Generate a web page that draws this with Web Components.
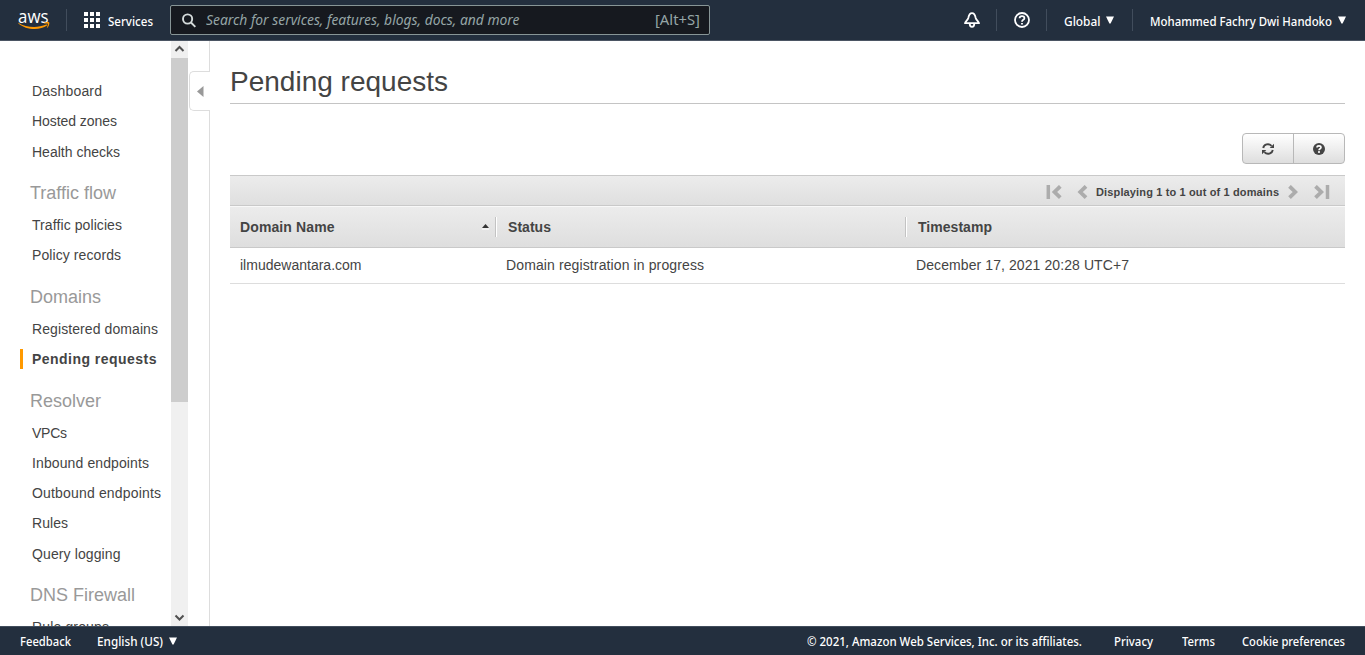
<!DOCTYPE html>
<html lang="en">
<head>
<meta charset="utf-8">
<title>Route 53 Console</title>
<style>
html,body{margin:0;height:100%;overflow:hidden;background:#fff}
body{font-family:"Liberation Sans",Arial,sans-serif;font-size:14px;color:#444}
</style>
</head>
<body>
<console-app></console-app>
<script>
const define=(name,html,ready)=>{
  const t=document.createElement('template');t.innerHTML=html;
  customElements.define(name,class extends HTMLElement{
    constructor(){super();this.attachShadow({mode:'open'}).appendChild(t.content.cloneNode(true));}
    connectedCallback(){if(ready)ready(this,this.shadowRoot);}
  });
};

/* Text run set to a given advance width: by tracking, or by horizontal scale with the "scale" attribute. */
define('fit-text',`<style>:host{display:inline-block;white-space:nowrap;flex:none}span{display:inline-block;transform-origin:0 50%}</style><span></span>`,(el,root)=>{
  const s=root.querySelector('span'),w=+el.getAttribute('w'),text=el.textContent;
  s.textContent=text;
  const n=s.getBoundingClientRect().width;
  el.style.width=w+'px';
  if(!n)return;
  if(el.hasAttribute('scale'))s.style.transform='scaleX('+w/n+')';
  else s.style.letterSpacing=(w-n)/(text.length-1)+'px';
});

define('down-caret',`<style>:host{display:block;flex:none;height:8px}svg{display:block}</style><svg width="8" height="8"><path d="M0 .5h8L4.6 7.5H3.4z" fill="#fff"/></svg>`);

define('aws-logo',`<style>:host{display:block;width:32px;height:26px;position:relative;font:500 18.500px/18px "Open Sans","Noto Sans",sans-serif;color:#fff}
fit-text{position:absolute;left:0;top:-1px}svg{position:absolute;left:0;top:14.500px}</style>
<fit-text w="30.500" scale>aws</fit-text>
<svg width="32" height="8" viewBox="0 0 32 8"><path d="M.3.7C8 5.6 19 6.6 28.3 2.6c.9-.4 1.5.4.7 1C22 8.600 8 8.400.2 1.200-.1.900 0 .600.3.700z" fill="#f90"/><path d="M26 .8c2-.9 4.800-.8 5.200-.3.400.5-.1 3.900-1.900 5.300-.3.200-.6.100-.4-.200.500-1.200 1.300-3.300.9-3.800-.4-.5-2.500-.3-3.600-.2-.4 0-.4-.5-.2-.8z" fill="#f90"/></svg>`);

define('top-bar',`<style>
:host{display:flex;align-items:center;box-sizing:border-box;height:41px;background:#232f3e;border-bottom:1px solid #4b5563;color:#fff;font:500 13px/20px "Noto Sans",sans-serif}
aws-logo{margin:1px 16px 0 18px}
i{width:1px;height:22px;background:#414d5c;flex:none}
.grid{margin:0 8px 0 17px;flex:none}
.search{box-sizing:border-box;display:flex;align-items:center;width:540px;height:30px;margin-left:17px;border:1px solid #879596;border-radius:2px;background:#16191f;color:#95a5a6;font-size:14px;font-weight:400}
.search svg{margin:0 9.500px 0 11px}.search em{flex:1}.search>fit-text{margin-right:9px}
.right{display:flex;align-items:center;margin-left:auto}
svg{display:block}
</style>
<aws-logo></aws-logo><i></i>
<svg class="grid" width="16" height="16" fill="#fff"><path d="M0 0h4v4H0zM6 0h4v4H6zM12 0h4v4h-4zM0 6h4v4H0zM6 6h4v4H6zM12 6h4v4h-4zM0 12h4v4H0zM6 12h4v4H6zM12 12h4v4h-4z"/></svg>
<fit-text w="45" scale style="margin-top:1px">Services</fit-text>
<div class="search"><svg width="14" height="15" viewBox="0 0 14 15" fill="none" stroke="#d5dbdb" stroke-width="1.9"><circle cx="5.600" cy="6" r="4.600"/><path d="M9 9.500l4.300 4.300"/></svg>
<em><fit-text w="313.500" scale>Search for services, features, blogs, docs, and more</fit-text></em><fit-text w="45" scale>[Alt+S]</fit-text></div>
<div class="right">
<svg width="16" height="16" viewBox="0 0 16 16" fill="none" stroke="#fff" stroke-width="1.800" stroke-linejoin="round" style="margin-right:16px"><path d="M8 1.200C5.200 1.200 4.800 3.600 4.300 6 3.800 8 1 9.800 1 11.200h14c0-1.400-2.800-3.200-3.300-5.200C11.200 3.600 10.800 1.200 8 1.200zM5.700 11.500c0 4.400 4.600 4.400 4.600 0"/></svg><i></i>
<svg width="16" height="16" viewBox="0 0 16 16" fill="none" stroke="#fff" stroke-width="1.800" style="margin:0 16px 0 17px"><circle cx="8" cy="8" r="7"/><path d="M5.600 6.300C5.600 3.300 10.400 3.300 10.400 6.200 10.400 8 8 7.600 8 9.800M8 10.900v1.600"/></svg><i></i>
<fit-text w="36.500" scale style="margin:1px 6px 0 17px">Global</fit-text><down-caret></down-caret><i style="margin-left:18px"></i>
<fit-text w="182" scale style="margin:1px 6px 0 17px">Mohammed Fachry Dwi Handoko</fit-text><down-caret style="margin-right:19px"></down-caret>
</div>`);

define('bottom-bar',`<style>
:host{display:flex;align-items:center;box-sizing:border-box;height:29px;background:#232f3e;border-top:1px solid #414d5c;color:#fff;font:500 12px/20px "Noto Sans",sans-serif;padding:2px 20px 0}
.right{margin-left:auto;display:flex;gap:32px}
</style>
<fit-text w="51" scale style="margin-right:26px">Feedback</fit-text><fit-text w="66" scale style="margin-right:6px">English (US)</fit-text><down-caret style="margin-top:-2px"></down-caret>
<div class="right"><fit-text w="275" scale>© 2021, Amazon Web Services, Inc. or its affiliates.</fit-text><fit-text w="39" scale>Privacy</fit-text><fit-text w="33" scale style="margin-left:-3px">Terms</fit-text><fit-text w="103" scale style="margin-left:-5px">Cookie preferences</fit-text></div>`);

define('nav-item',`<style>
:host{display:flex;align-items:center;box-sizing:border-box;height:30.200px;padding-left:32px;line-height:16px}
:host([active]){font-weight:700;padding-left:28px}
b{display:none}:host([active]) b{display:block;width:3px;height:20px;background:#f90;margin:0 9px 0 -8px}
</style><b></b><slot></slot>`);
define('nav-heading',`<style>:host{display:block;box-sizing:border-box;height:43.500px;padding:16.300px 0 0 30px;font-size:18px;line-height:21px;color:#999}</style><slot></slot>`);

define('scroll-track',`<style>
:host{display:flex;flex-direction:column;width:17px;background:#f0f0f0;flex:none}
svg{display:block;flex:none}.thumb{height:344px;background:#cdcdcd}.space{flex:1}
</style>
<svg width="17" height="17" fill="none" stroke="#505050" stroke-width="2"><path d="M4.500 10l4-4 4 4"/></svg><div class="thumb"></div><div class="space"></div>
<svg width="17" height="17" fill="none" stroke="#505050" stroke-width="2"><path d="M4.500 6.500l4 4 4-4"/></svg>`);

define('side-nav',`<style>
:host{display:flex;box-sizing:border-box;width:210px;border-right:1px solid #ddd;overflow:visible;position:relative}
nav{width:171px;box-sizing:border-box;padding-top:34.900px;overflow:hidden}
.tab{position:absolute;left:189px;top:30px;width:21px;height:40px;box-sizing:border-box;background:#fff;border:1px solid #ddd;border-right:0;border-radius:5px 0 0 5px}
.tab svg{display:block;margin:14px 0 0 7px}
</style>
<nav>
<nav-item><fit-text w="70">Dashboard</fit-text></nav-item>
<nav-item><fit-text w="85">Hosted zones</fit-text></nav-item>
<nav-item style="padding-top:.500px"><fit-text w="88">Health checks</fit-text></nav-item>
<nav-heading><fit-text w="86">Traffic flow</fit-text></nav-heading>
<nav-item><fit-text w="90">Traffic policies</fit-text></nav-item>
<nav-item><fit-text w="89">Policy records</fit-text></nav-item>
<nav-heading><fit-text w="71">Domains</fit-text></nav-heading>
<nav-item><fit-text w="126">Registered domains</fit-text></nav-item>
<nav-item active><fit-text w="124.500">Pending requests</fit-text></nav-item>
<nav-heading><fit-text w="71">Resolver</fit-text></nav-heading>
<nav-item><fit-text w="35">VPCs</fit-text></nav-item>
<nav-item><fit-text w="117">Inbound endpoints</fit-text></nav-item>
<nav-item><fit-text w="129">Outbound endpoints</fit-text></nav-item>
<nav-item><fit-text w="36">Rules</fit-text></nav-item>
<nav-item><fit-text w="88.500">Query logging</fit-text></nav-item>
<nav-heading><fit-text w="105">DNS Firewall</fit-text></nav-heading>
<nav-item><fit-text w="77">Rule groups</fit-text></nav-item>
</nav><scroll-track></scroll-track>
<div class="tab"><svg width="7" height="12"><path d="M6.500 0v11L0 5.500z" fill="#999"/></svg></div>`);

define('tool-buttons',`<style>
:host{display:flex;box-sizing:border-box;width:103px;height:31px;border:1px solid #b8b8b8;border-radius:4px;background:linear-gradient(#fff,#dedede)}
span{flex:1;display:flex;align-items:center;justify-content:center}span+span{border-left:1px solid #b8b8b8}
</style>
<span><svg width="12" height="12" viewBox="0 0 12 12"><g fill="none" stroke="#444" stroke-width="1.900"><path d="M1.200 5C1.900 1.200 6.800-.1 9.600 2.900M10.800 7C10.100 10.800 5.200 12.100 2.400 9.100"/></g><path d="M12 .700V5H7.700zM0 11.300V7h4.300z" fill="#444"/></svg></span>
<span><svg width="12" height="12" viewBox="0 0 12 12"><circle cx="6" cy="6" r="6" fill="#444"/><path d="M4 4.500C4 2.300 8 2.300 8 4.500 8 5.900 6 5.700 6 7.300M6 8.100v1.800" fill="none" stroke="#fff" stroke-width="1.600"/></svg></span>`);

define('pager-bar',`<style>
:host{display:flex;align-items:center;justify-content:flex-end;box-sizing:border-box;height:31px;border-top:1px solid #c9c9c9;border-bottom:1px solid #c9c9c9;background:linear-gradient(#ececec,#dfdfdf);padding:2px 15px 0 0;font:bold 11px/14px "Liberation Sans",Arial,sans-serif}
svg{display:block;flex:none;fill:none;stroke:#acacac;stroke-width:3.800;position:relative;top:.5px}
</style>
<svg width="16" height="15" style="margin-right:15px"><path d="M2.300 0v14" stroke-width="3.500"/><path d="M14.300 1.300L8.500 7l5.800 5.700"/></svg>
<svg width="11" height="15" style="margin-right:8px"><path d="M9 1.300L3.200 7 9 12.700"/></svg>
<fit-text w="183">Displaying 1 to 1 out of 1 domains</fit-text>
<svg width="11" height="15" style="margin:0 15px 0 9px"><path d="M1.500 1.300L7.300 7l-5.800 5.700"/></svg>
<svg width="16" height="15"><path d="M1.500 1.300L7.300 7l-5.800 5.700"/><path d="M13.500 0v14" stroke-width="3.500"/></svg>`);

define('data-table',`<style>
:host{display:block}
.row{display:grid;grid-template-columns:266px 410px 1fr;align-items:center;box-sizing:border-box}
.head{height:42px;border-top:1px solid #f8f8f8;border-bottom:1px solid #c9c9c9;background:linear-gradient(#ececec,#dedede);font-weight:700}
.head div{display:flex;align-items:center;justify-content:space-between;height:20px;box-sizing:border-box;padding:0 7px 0 10px}
.head div+div{border-left:1px solid #fff;box-shadow:-1px 0 #c3c3c3;padding-left:11px}
.body{height:36px;border-bottom:1px solid #ddd;padding-bottom:2px}.body div{padding-left:10px}
</style>
<div class="row head"><div><fit-text w="94.500">Domain Name</fit-text><svg width="7" height="6"><path d="M0 4l3.500-4L7 4z" fill="#333"/><path d="M0 5h7" stroke="#fff"/></svg></div><div><fit-text w="43">Status</fit-text></div><div><fit-text w="74">Timestamp</fit-text></div></div>
<div class="row body"><div><fit-text w="121.500">ilmudewantara.com</fit-text></div><div><fit-text w="198">Domain registration in progress</fit-text></div><div><fit-text w="213">December 17, 2021 20:28 UTC+7</fit-text></div></div>`);

define('main-panel',`<style>
:host{display:block;flex:1;padding:21px 20px 0}
h1{margin:0;height:42px;box-sizing:border-box;border-bottom:1px solid #c4c4c4;font-weight:400;font-size:28px;line-height:39px}
.tools{display:flex;justify-content:flex-end;padding:29px 0 11px}
</style>
<h1><fit-text w="218">Pending requests</fit-text></h1>
<div class="tools"><tool-buttons></tool-buttons></div><pager-bar></pager-bar><data-table></data-table>`);

define('console-app',`<style>:host{display:flex;flex-direction:column;height:655px}.mid{display:flex;flex:1;min-height:0}</style>
<top-bar></top-bar><div class="mid"><side-nav></side-nav><main-panel></main-panel></div><bottom-bar></bottom-bar>`);
</script>
</body>
</html>
